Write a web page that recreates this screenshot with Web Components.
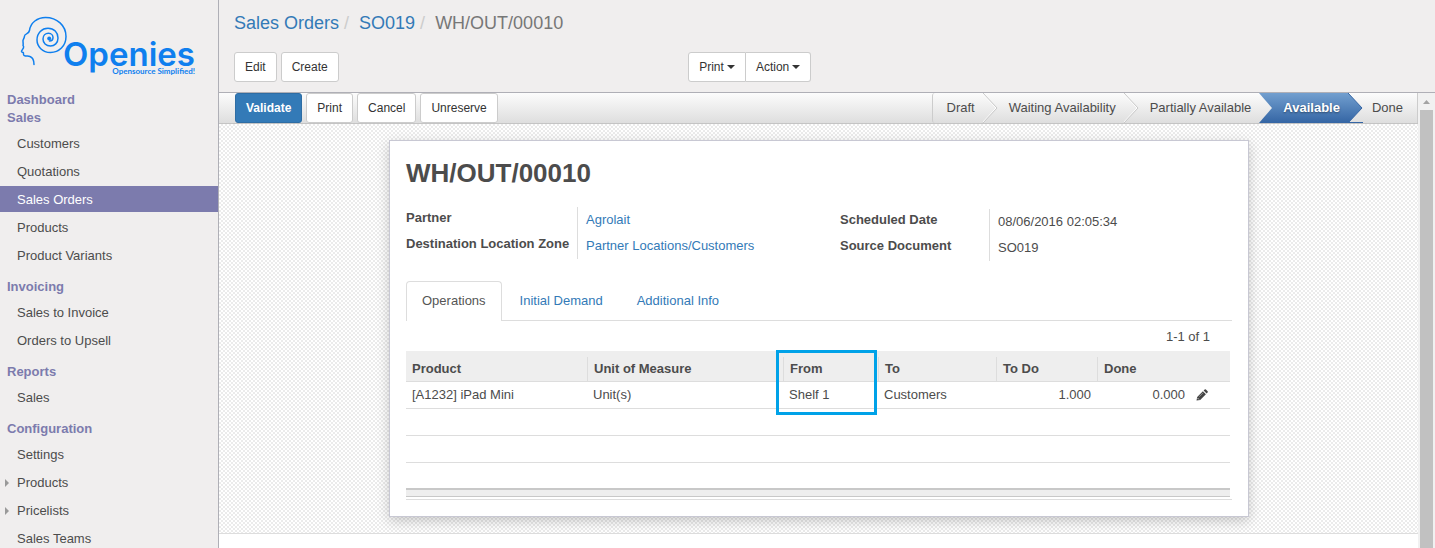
<!DOCTYPE html>
<html lang="en">
<head>
<meta charset="utf-8">
<title>WH/OUT/00010 - Openies</title>
<style>
  html, body { height: 100%; }
  body { margin: 0; overflow: hidden; font: 13px/18px "Liberation Sans", Arial, sans-serif; color: #4c4c4c; }
</style>
</head>
<body>
<app-shell>
  <side-menu slot="side">
    <menu-section heading="Dashboard" compact></menu-section>
    <menu-section heading="Sales" first>
      <menu-item>Customers</menu-item>
      <menu-item>Quotations</menu-item>
      <menu-item active>Sales Orders</menu-item>
      <menu-item>Products</menu-item>
      <menu-item>Product Variants</menu-item>
    </menu-section>
    <menu-section heading="Invoicing">
      <menu-item>Sales to Invoice</menu-item>
      <menu-item>Orders to Upsell</menu-item>
    </menu-section>
    <menu-section heading="Reports">
      <menu-item>Sales</menu-item>
    </menu-section>
    <menu-section heading="Configuration">
      <menu-item>Settings</menu-item>
      <menu-item expandable>Products</menu-item>
      <menu-item expandable>Pricelists</menu-item>
      <menu-item>Sales Teams</menu-item>
    </menu-section>
  </side-menu>
  <control-panel slot="top"></control-panel>
  <status-bar>
    <ui-button primary>Validate</ui-button>
    <ui-button>Print</ui-button>
    <ui-button>Cancel</ui-button>
    <ui-button>Unreserve</ui-button>
    <status-steps slot="steps" steps="Draft,Waiting Availability,Partially Available,Available,Done" current="Available"></status-steps>
  </status-bar>
  <form-sheet>
    <h1 slot="title">WH/OUT/00010</h1>
    <field-group slot="fields">
      <field-row label="Partner"><a href="#partner">Agrolait</a></field-row>
      <field-row label="Destination Location Zone"><a href="#zone">Partner Locations/Customers</a></field-row>
    </field-group>
    <field-group slot="fields" narrow>
      <field-row label="Scheduled Date">08/06/2016 02:05:34</field-row>
      <field-row label="Source Document">SO019</field-row>
    </field-group>
    <tab-list></tab-list>
    <operation-list></operation-list>
  </form-sheet>
</app-shell>

<script>
const define = (name, html, setup) => {
  const tpl = document.createElement('template');
  tpl.innerHTML = html;
  customElements.define(name, class extends HTMLElement {
    constructor() {
      super();
      this.attachShadow({ mode: 'open' }).append(tpl.content.cloneNode(true));
    }
    connectedCallback() { if (setup) setup(this, this.shadowRoot); }
  });
};

define('app-shell', `
<style>
  :host { display: flex; height: 100vh; }
  .side { flex: 0 0 218px; background: #f0eeee; border-right: 1px solid #afafb6; overflow: hidden; }
  .main { flex: 1; min-width: 0; display: flex; flex-direction: column; }
  .body { flex: 1; min-height: 0; display: flex; }
  .content { flex: 1; min-width: 0; overflow: hidden; background: #fff; }
</style>
<nav class="side"><slot name="side"></slot></nav>
<div class="main">
  <slot name="top"></slot>
  <div class="body"><main class="content"><slot></slot></main><scroll-rail></scroll-rail></div>
</div>`);

define('scroll-rail', `
<style>
  :host { display: flex; flex-direction: column; align-items: center; width: 17px; background: #f1f1f1; }
  svg { flex: none; display: block; }
  .thumb { flex: 1; width: 13px; background: #c1c1c1; }
</style>
<svg width="17" height="17" viewBox="0 0 17 17"><path d="M5 11 8.500 7 12 11z" fill="#a3a3a3"/></svg>
<div class="thumb"></div>`);

define('brand-logo', `
<style>
  :host { display: flex; height: 91px; box-sizing: border-box; padding: 16px 0 0 20px; color: #0f7fee; font-family: Inter, sans-serif; }
  svg { flex: none; margin-right: -5px; }
  .words { display: flex; flex-direction: column; width: 132px; padding-top: 20px; }
  .name { font-size: 33px; line-height: 36px; font-weight: 600; }
  .tag { align-self: flex-end; font: 700 8px/10px Lato, sans-serif; margin-top: -6px; white-space: nowrap; }
</style>
<svg width="48" height="50" viewBox="20 16 48 50" fill="none" stroke="currentColor" stroke-width="1.500" stroke-linecap="round">
  <path d="M34 64.500C34 60.500 32.500 57.500 30 56.500C28 55.600 26 56.800 24 55.300C22.800 54.300 24 53.300 23.200 52.500C22 52.300 21.300 51.800 21.500 51.200C22 49.500 23.800 48.500 23.600 46.800C23.400 45.800 22.500 45.500 23.200 44.300L23 41.500C22.400 39.500 24.500 38.500 24.400 36.500C24.400 33 28.700 34.800 29.500 30.500C30.500 22.500 37.500 17.500 45.500 17.500C57 17.500 66 25.500 66 36.500C66 46 59 52.500 50.500 52.500C42.500 52.500 37 46.500 37 40C37 33 42 28.300 48 28.300C54 28.300 58 32.500 58 38C58 43 54.500 46 50.500 46C46 46 43 43 43 39C43 35.500 45.500 33.300 48.500 33.300C51.500 33.300 53 35.500 53 37.500C53 39.500 51.500 41 49.500 41"/>
  <circle cx="49.200" cy="38.500" r="2" fill="currentColor" stroke="none"/>
</svg>
<span class="words"><span class="name">Openies</span><span class="tag">Opensource Simplified!</span></span>`);

define('side-menu', `
<style>:host { display: block; }</style>
<brand-logo></brand-logo>
<slot></slot>`);

define('menu-section', `
<style>
  :host { display: block; }
  h2 { margin: 0; padding: 9px 7px 2px; font-size: 13px; line-height: 18px; font-weight: bold; color: #7c7bad; }
  :host([first]) h2 { padding-top: 0; }
  :host([compact]) h2 { padding-top: 0; padding-bottom: 0; }
</style>
<h2></h2><slot></slot>`, (el, root) => { root.querySelector('h2').textContent = el.getAttribute('heading'); });

define('menu-item', `
<style>
  :host { display: block; padding: 1px 0; }
  a { display: flex; align-items: center; box-sizing: border-box; height: 26px; padding-top: 2px; color: #4c4c4c; text-decoration: none; }
  i { box-sizing: border-box; width: 17px; padding-left: 5px; }
  i::before { content: ""; display: none; width: 0; border: 4px solid transparent; border-left-color: #9a9a9a; border-right-width: 0; }
  :host([expandable]) i::before { display: block; }
  :host([active]) a { background: #7c7bad; color: #fff; }
</style>
<a href="#menu"><i></i><slot></slot></a>`);

define('ui-button', `
<style>
  :host { display: inline-block; }
  button { display: flex; align-items: center; height: 30px; box-sizing: border-box; padding: 0 10px; font: inherit; font-size: 12px; line-height: 18px;
    color: #333; background: #fff; border: 1px solid #ccc; border-radius: 3px; white-space: nowrap; }
  :host([primary]) button { background: #337ab7; border-color: #2e6da4; color: #fff; font-weight: bold; }
  :host([caret]) button::after { content: ""; margin-left: 3px; border: 4px solid transparent; border-top-color: #333; border-bottom-width: 0; }
  :host([join=left]) button { border-radius: 3px 0 0 3px; }
  :host([join=right]) button { border-radius: 0 3px 3px 0; border-left: 0; }
</style>
<button type="button"><slot></slot></button>`);

define('control-panel', `
<style>
  :host { display: block; height: 92px; background: #f0eeee; border-bottom: 1px solid #afafb6; }
  ol { display: flex; margin: 0; padding: 12px 15px 18px; list-style: none; font-size: 18px; line-height: 22px; color: #777; }
  li + li::before { content: "/"; color: #ccc; margin: 0 10px 0 5px; }
  a { color: #337ab7; text-decoration: none; }
  .row { display: grid; grid-template-columns: 18fr 29fr; padding: 0 15px; }
  .group { display: flex; gap: 4px; }
  .joined { gap: 0; }
</style>
<ol><li><a href="#orders">Sales Orders</a></li><li><a href="#so019">SO019</a></li><li>WH/OUT/00010</li></ol>
<div class="row">
  <div class="group"><ui-button>Edit</ui-button><ui-button>Create</ui-button></div>
  <div class="group joined"><ui-button caret join="left">Print</ui-button><ui-button caret join="right">Action</ui-button></div>
</div>`);

define('status-bar', `
<style>
  :host { display: flex; justify-content: space-between; height: 30px; padding-left: 16px; border-bottom: 1px solid #c4c4c4; background: linear-gradient(#fcfcfc, #dedede); }
  .buttons { display: flex; gap: 4px; }
</style>
<div class="buttons"><slot></slot></div><slot name="steps"></slot>`);

define('status-steps', `
<style>
  :host { display: block; }
  ol { display: flex; height: 30px; margin: 0; padding: 0 14px 0 3px; list-style: none; border: 1px solid #ccc; border-width: 0 1px; border-radius: 3px 0 0 3px; }
  li { display: flex; line-height: 30px; white-space: nowrap; }
  span { padding: 0 8px 0 11px; }
  li:last-child span { padding-right: 0; }
  svg { display: block; flex: none; }
  .current span { color: #fff; font-weight: bold; background: linear-gradient(#729fcf, #3465a4); text-shadow: 0 1px 2px rgba(0,0,0,.4); padding-left: 9px; }
  .current + li span { padding-left: 9px; }
</style>
<svg width="0" height="0" style="position:absolute"><defs>
  <linearGradient id="blue" x2="0" y2="30" gradientUnits="userSpaceOnUse"><stop stop-color="#729fcf"/><stop offset="1" stop-color="#3465a4"/></linearGradient>
  <linearGradient id="grey" x2="0" y2="30" gradientUnits="userSpaceOnUse"><stop stop-color="#fcfcfc"/><stop offset="1" stop-color="#dedede"/></linearGradient>
</defs></svg>
<ol></ol>`, (el, root) => {
  const steps = el.getAttribute('steps').split(',');
  const current = steps.indexOf(el.getAttribute('current'));
  const arrow = i => {
    let art = '<path d="M-1 0 13 15 -1 30" fill="none" stroke="#fff"/><path d="M0 0 14 15 0 30" fill="none" stroke="#c8c8c8"/>';
    if (i === current) art = '<path d="M0 0h15v30H0z" fill="url(#blue)"/><path d="M0 0 13 15 0 30z" fill="url(#grey)"/>';
    if (i === current + 1) art = '<path d="M0 0 14 15 0 30z" fill="url(#blue)"/><path d="M0 0 14 15 0 30" fill="none" stroke="#3465a4"/><path d="M0 29h15v1H0z" fill="#3465a4"/>';
    return '<svg width="15" height="30" viewBox="0 0 15 30">' + art + '</svg>';
  };
  root.querySelector('ol').innerHTML = steps.map((s, i) =>
    `<li${i === current ? ' class="current" aria-current="step"' : ''}>${i ? arrow(i) : ''}<span>${s}</span></li>`).join('');
});

define('form-sheet', `
<style>
  :host { display: block; padding: 16px 16px 16px 17px; border-bottom: 1px solid #ddd;
    background: repeating-conic-gradient(#ebebeb 0 25%, #fff 0 50%) 0 0 / 4px 4px; }
  .sheet { box-sizing: border-box; max-width: 860px; margin: 0 auto; padding: 16px; background: #fff;
    border: 1px solid #c8c8d3; box-shadow: 0 4px 12px rgba(0,0,0,.2); }
  ::slotted(h1) { margin: 0 0 18px; font-size: 26px; line-height: 32px; font-weight: bold; }
  .fields { display: grid; grid-template-columns: 1fr 1fr; column-gap: 42px; margin-bottom: 20px; }
</style>
<article class="sheet">
  <slot name="title"></slot>
  <div class="fields"><slot name="fields"></slot></div>
  <slot></slot>
</article>`);

define('field-group', `
<style>
  :host { display: block; --label: 171px; }
  :host([narrow]) { --label: 149px; padding-top: 2px; }
</style>
<slot></slot>`);

define('field-row', `
<style>
  :host { display: block; }
  dl { display: flex; margin: 0; height: 26px; }
  dt { flex: 0 0 var(--label); font-weight: bold; line-height: 22px; white-space: nowrap; }
  dd { margin: 0; padding-left: 8px; border-left: 1px solid #ddd; line-height: 26px; }
  ::slotted(a) { color: #337ab7; text-decoration: none; }
</style>
<dl><dt></dt><dd><slot></slot></dd></dl>`, (el, root) => { root.querySelector('dt').textContent = el.getAttribute('label'); });

define('tab-list', `
<style>
  :host { display: flex; gap: 2px; border-bottom: 1px solid #ddd; }
  button { height: 39px; padding: 0 15px; font: inherit; color: #337ab7; background: none; border: 1px solid transparent; border-bottom: 0; border-radius: 4px 4px 0 0; }
  [aria-selected=true] { height: 40px; margin-bottom: -1px; padding-bottom: 2px; color: #555; background: #fff; border-color: #ddd; }
</style>
<button role="tab" aria-selected="true">Operations</button>
<button role="tab">Initial Demand</button>
<button role="tab">Additional Info</button>`);

define('operation-list', `
<style>
  :host { display: block; border-bottom: 1px solid #ddd; padding: 6px 2px 2px 0; }
  .pager { padding: 0 20px 5px 0; text-align: right; line-height: 19px; }
  table { width: 100%; table-layout: fixed; border-collapse: separate; border-spacing: 0; }
  th, td { box-sizing: border-box; padding: 0 6px; text-align: left; border-bottom: 1px solid #ddd; white-space: nowrap; }
  th { height: 31px; padding-top: 5px; background: #eee; }
  th:nth-child(n+2):nth-child(-n+6) { padding-left: 7px; background: linear-gradient(#ddd, #ddd) 0 6px / 1px 100% no-repeat #eee; }
  td { height: 27px; }
  .num { text-align: right; }
  .tool { padding-left: 5px; }
  .marked { position: relative; }
  .marked::after { content: ""; position: absolute; box-sizing: border-box; inset: -1px 1px auto -7px; height: 65px; border: 3px solid #00a2e8; }
  tbody tr:last-child td { height: 25px; border-bottom: 0; }
  tfoot td { height: 9px; background: #eee; border-top: 2px solid #c8c8c8; border-bottom: 1px solid #c8c8c8; }
  button { display: block; padding: 0; border: 0; background: none; color: #444; }
  svg { display: block; }
</style>
<div class="pager">1-1 of 1</div>
<table>
  <colgroup><col><col style="width:196px"><col style="width:95px"><col style="width:118px"><col style="width:101px"><col style="width:94px"><col style="width:39px"></colgroup>
  <thead><tr><th>Product</th><th>Unit of Measure</th><th class="marked">From</th><th>To</th><th>To Do</th><th>Done</th><th></th></tr></thead>
  <tbody>
    <tr><td>[A1232] iPad Mini</td><td>Unit(s)</td><td>Shelf 1</td><td>Customers</td><td class="num">1.000</td><td class="num">0.000</td>
      <td class="tool"><button type="button" aria-label="Edit line"><svg width="12" height="12" viewBox="0 0 12 12"><path fill="currentColor" d="M.5 11.500 1.200 7.900 6.900 2.200 9.900 5.200 4.200 10.900zM7.600 1.500 8.700.5Q9.300 0 9.900.5L11.600 2.200Q12.100 2.800 11.600 3.400L10.600 4.500z"/><path d="M3.200 7.700 7.200 3.700" stroke="#fff" stroke-width=".4"/><path d="M1.600 9.100 2.900 10.400" stroke="#fff" stroke-width=".8"/></svg></button></td></tr>
    <tr><td colspan="7"></td></tr>
    <tr><td colspan="7"></td></tr>
    <tr><td colspan="7"></td></tr>
  </tbody>
  <tfoot><tr><td colspan="7"></td></tr></tfoot>
</table>`);
</script>
</body>
</html>
